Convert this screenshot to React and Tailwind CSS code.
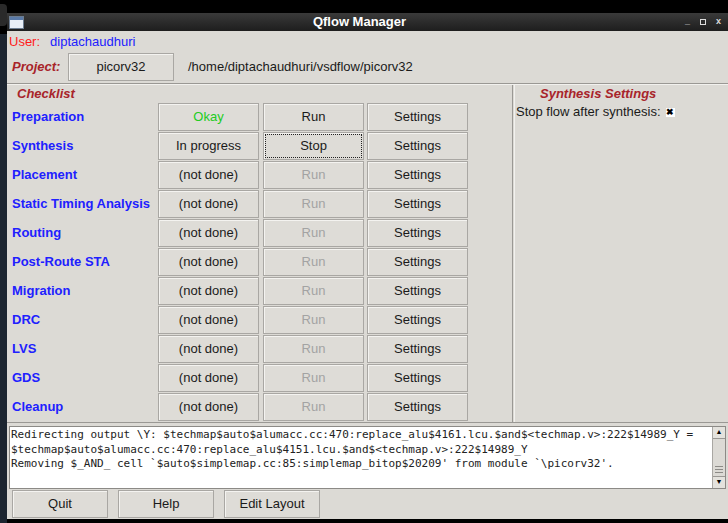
import React from "react";

const steps = [
  ["Preparation", "Okay", "Run"],
  ["Synthesis", "In progress", "Stop"],
  ["Placement", "(not done)", "Run"],
  ["Static Timing Analysis", "(not done)", "Run"],
  ["Routing", "(not done)", "Run"],
  ["Post-Route STA", "(not done)", "Run"],
  ["Migration", "(not done)", "Run"],
  ["DRC", "(not done)", "Run"],
  ["LVS", "(not done)", "Run"],
  ["GDS", "(not done)", "Run"],
  ["Cleanup", "(not done)", "Run"],
];

function Btn({ children, className = "", text = "text-[#1a1a1a]" }) {
  return (
    <div
      className={`flex items-center justify-center h-[28px] bg-[#dedcd7] border border-[#a9a7a3] shadow-[inset_1px_1px_0_#f4f3f0] text-[13px] ${text} ${className}`}
    >
      {children}
    </div>
  );
}

export default function App() {
  return (
    <div className="w-[728px] h-[523px] bg-black flex overflow-hidden" style={{ fontFamily: "'Liberation Sans', Arial, sans-serif" }}>
      <div className="w-[7px] flex flex-col">
        <div className="h-[22px] bg-[#2a2a2a] mt-[4px] rounded-r-sm" />
        <div className="h-[8px]" />
        <div className="flex-1 bg-[#1c2530]" />
      </div>

      <div className="flex flex-col w-[721px] mt-[13px] h-[506px]">
        {/* title bar */}
        <div className="h-[18px] bg-gradient-to-b from-[#3a3a3a] to-[#1e1e1e] flex items-center px-[2px] relative">
          <div className="w-[15px] h-[13px] bg-[#e8eef6] border border-[#6c7c90] flex flex-col">
            <div className="h-[3px] bg-[#5a7aa8]" />
          </div>
          <div className="flex-1 text-center text-white font-bold text-[13px] pl-[10px]">Qflow Manager</div>
          <div className="flex items-center gap-[10px] pr-[5px] text-[#ddd] text-[9px] font-bold">
            <span>_</span>
            <span className="w-[6px] h-[6px] border-[1.5px] border-[#ddd]" />
            <span>x</span>
          </div>
        </div>

        <div className="flex-1 bg-[#dcdad5] flex flex-col">
          <div className="h-[22px] flex items-center pl-[2px] text-[13px]">
            <span className="text-[#ff1a1a]">User:</span>
            <span className="ml-[10px] text-[#2020ff]">diptachaudhuri</span>
          </div>

          <div className="flex items-center h-[28px] pl-[5px] text-[13px]">
            <span className="text-[#a8242a] font-bold italic w-[56px]">Project:</span>
            <Btn className="w-[106px] h-[27px]">picorv32</Btn>
            <span className="ml-[14px] text-[#1a1a1a]">/home/diptachaudhuri/vsdflow/picorv32</span>
          </div>

          <div className="mt-[2px] border-t border-[#9a9894] border-b border-b-[#f2f1ee] h-0" />

          <div className="flex h-[337px]">
            <div className="w-[505px] flex flex-col">
              <div className="h-[17px] pl-[10px] pt-[1px] text-[13px] font-bold italic text-[#a8242a] leading-[15px]">Checklist</div>
              {steps.map(([name, status, action], i) => (
                <div key={name} className="flex items-center h-[29px] pl-[5px]">
                  <div className="w-[146px] text-[13px] font-bold text-[#2020ff]">{name}</div>
                  <Btn
                    className="w-[101px]"
                    text={status === "Okay" ? "text-[#22cc22]" : "text-[#1a1a1a]"}
                  >
                    {status}
                  </Btn>
                  <div className="w-[4px]" />
                  {action === "Stop" ? (
                    <Btn className="w-[101px] p-[1px]">
                      <div className="w-full h-full flex items-center justify-center border border-dotted border-[#222]">Stop</div>
                    </Btn>
                  ) : (
                    <Btn className="w-[101px]" text={i === 0 ? "text-[#1a1a1a]" : "text-[#a3a3a3]"}>
                      {action}
                    </Btn>
                  )}
                  <div className="w-[3px]" />
                  <Btn className="w-[101px]">Settings</Btn>
                </div>
              ))}
            </div>
            <div className="w-[3px] border-l border-[#9a9894] border-r border-r-[#f2f1ee]" />
            <div className="flex-1 flex flex-col">
              <div className="h-[17px] pt-[1px] leading-[15px] pl-[25px] text-[13px] font-bold italic text-[#a8242a]">Synthesis Settings</div>
              <div className="flex items-center pl-[1px] h-[20px] text-[13px] text-[#1a1a1a]">
                Stop flow after synthesis:
                <span className="ml-[5px] w-[9px] h-[9px] bg-white flex items-center justify-center text-[9px] font-bold leading-none text-black">✖</span>
              </div>
            </div>
          </div>

          <div className="border-t border-[#9a9894] h-0" />

          <div className="flex mx-[2px] mt-[3px] h-[63px] border border-[#8c8a86]">
            <div
              className="flex-1 bg-white px-[1px] pt-[1px] text-[11px] leading-[14.5px] text-[#222] whitespace-pre overflow-hidden"
              style={{ fontFamily: "'DejaVu Sans Mono', 'Liberation Mono', monospace" }}
            >
              {"Redirecting output \\Y: $techmap$auto$alumacc.cc:470:replace_alu$4161.lcu.$and$<techmap.v>:222$14989_Y =\n$techmap$auto$alumacc.cc:470:replace_alu$4151.lcu.$and$<techmap.v>:222$14989_Y\nRemoving $_AND_ cell `$auto$simplemap.cc:85:simplemap_bitop$20209' from module `\\picorv32'."}
            </div>
            <div className="w-[13px] bg-[#c8c6c1] border-l border-[#a9a7a3] flex flex-col">
              <div className="h-[12px] bg-[#e4e2dd] border-b border-[#9a9894] flex items-center justify-center text-[7px] text-black">▲</div>
              <div className="h-[38px] bg-[#dcdad5] border-b border-[#9a9894] flex flex-col items-center justify-end pb-[3px] gap-[2px]">
                <div className="w-[8px] h-px bg-[#8c8a86]" />
                <div className="w-[8px] h-px bg-[#8c8a86]" />
                <div className="w-[8px] h-px bg-[#8c8a86]" />
              </div>
              <div className="flex-1 bg-[#e4e2dd] flex items-center justify-center text-[7px] text-black">▼</div>
            </div>
          </div>

          <div className="flex items-center gap-[10px] pl-[5px] h-[29px]">
            <Btn className="w-[96px]">Quit</Btn>
            <Btn className="w-[96px]">Help</Btn>
            <Btn className="w-[96px]">Edit Layout</Btn>
          </div>
        </div>
      </div>
    </div>
  );
}
